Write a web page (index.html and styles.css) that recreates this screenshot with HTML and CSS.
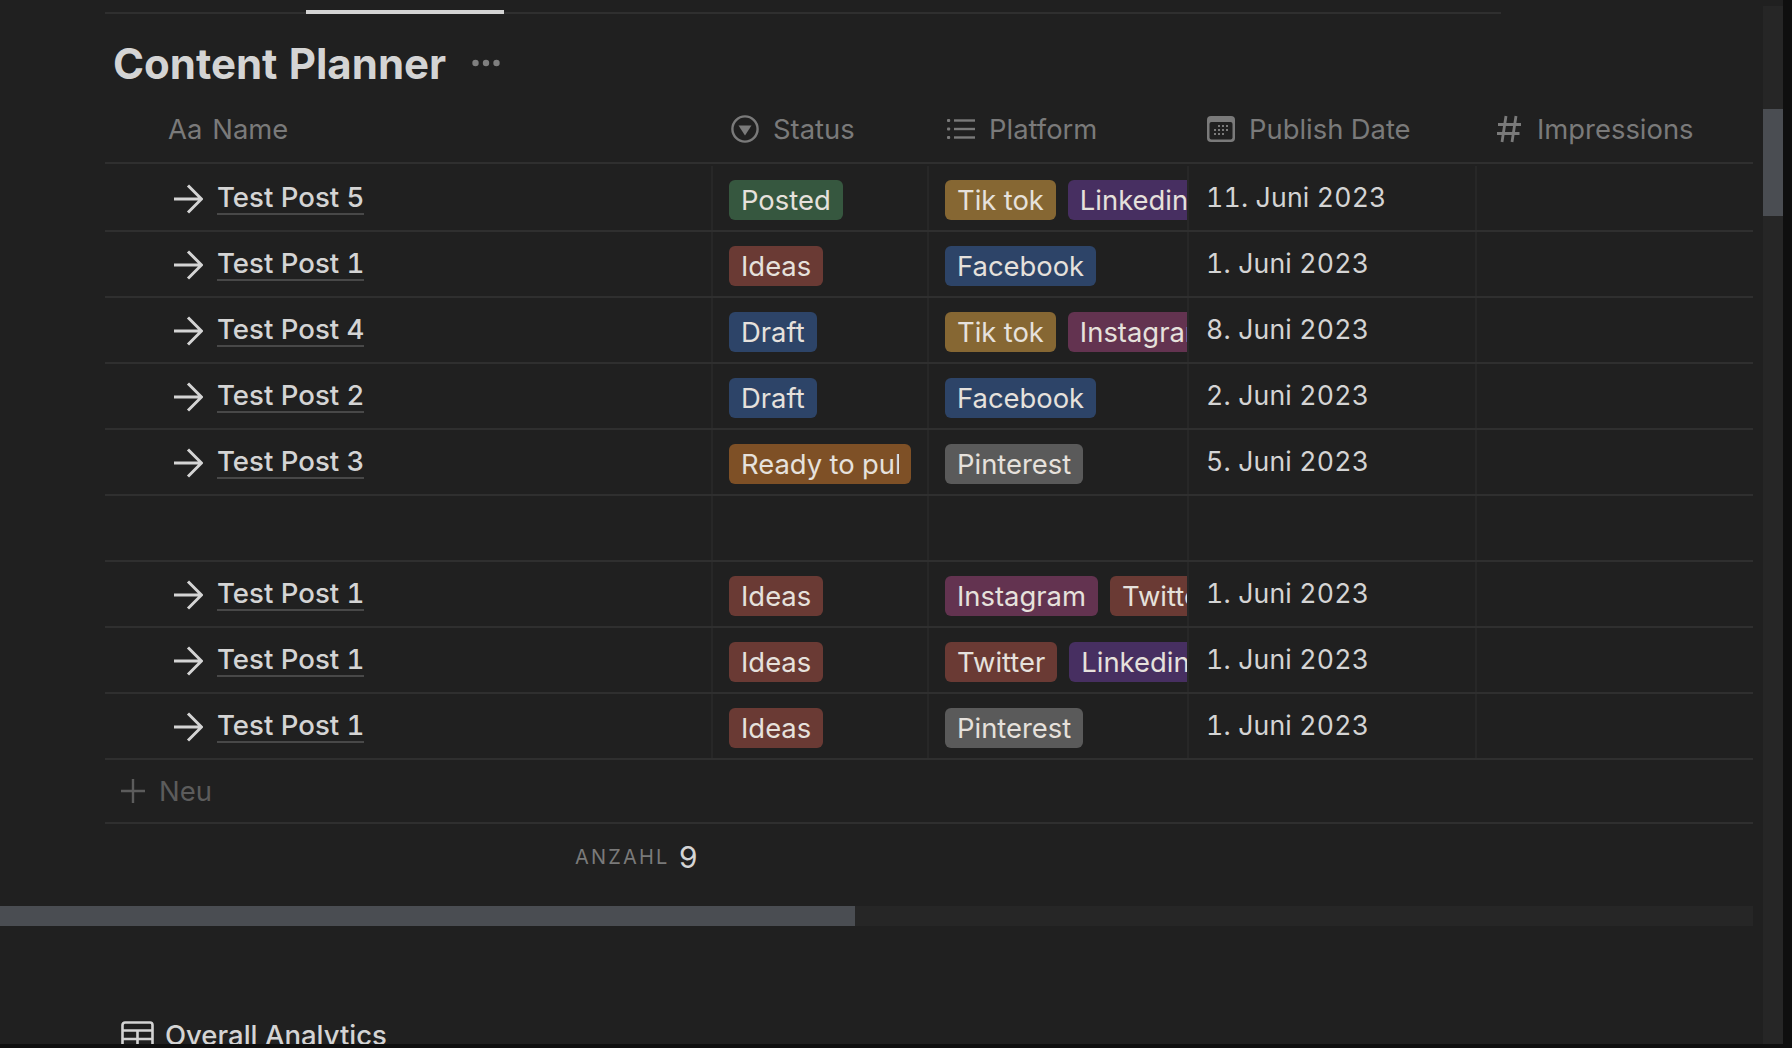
FILE: index.html
```html
<!DOCTYPE html>
<html lang="en">
<head>
    <meta charset="UTF-8">
    <title>Content Planner</title>
    <link rel="stylesheet" href="styles.css">
</head>
<body>
    <svg class="icon-defs" width="0" height="0">
        <symbol id="arrow" viewBox="0 0 30 30">
            <path d="M1 15H28.5M15 1.5L28.5 15L15 28.5" fill="none" stroke="currentColor" stroke-width="3"/>
        </symbol>
    </svg>

    <div class="viewport">
        <div class="content">
            <!-- Tabs -->
            <div class="tabs">
                <div class="tab-active"></div>
            </div>

            <!-- Title -->
            <div class="title-row">
                <h1 class="title">Content Planner</h1>
                <svg class="title-dots" width="28" height="8" viewBox="0 0 28 8" fill="currentColor">
                    <circle cx="3.5" cy="4" r="3.2"/>
                    <circle cx="14" cy="4" r="3.2"/>
                    <circle cx="24.500" cy="4" r="3.2"/>
                </svg>
            </div>

            <!-- Table -->
            <div class="table">
                <div class="row head-row">
                    <div class="head-cell name-head"><span class="aa">Aa</span>Name</div>
                    <div class="head-cell">
                        <svg class="head-icon" width="28" height="28" viewBox="0 0 28 28">
                            <circle cx="14" cy="14" r="12.600" fill="none" stroke="currentColor" stroke-width="2.400"/>
                            <path d="M7.500 10.500H20.500L14 20.500Z" fill="currentColor"/>
                        </svg>
                        Status
                    </div>
                    <div class="head-cell">
                        <svg class="head-icon" width="28" height="28" viewBox="0 0 28 28" fill="currentColor">
                            <rect x="0" y="4" width="3.200" height="3" rx="1"/>
                            <rect x="0" y="12.500" width="3.200" height="3" rx="1"/>
                            <rect x="0" y="21" width="3.200" height="3" rx="1"/>
                            <rect x="7" y="4.300" width="21" height="2.400"/>
                            <rect x="7" y="12.800" width="21" height="2.400"/>
                            <rect x="7" y="21.300" width="21" height="2.400"/>
                        </svg>
                        Platform
                    </div>
                    <div class="head-cell">
                        <svg class="head-icon" width="28" height="28" viewBox="0 0 28 28">
                            <rect x="0" y="1" width="28" height="26" rx="4" fill="currentColor"/>
                            <rect x="2.500" y="7" width="23" height="17.500" rx="2" fill="#202020"/>
                            <g fill="currentColor">
                                <rect x="11" y="10" width="2" height="2"/><rect x="15" y="10" width="2" height="2"/><rect x="19" y="10" width="2" height="2"/>
                                <rect x="7" y="14" width="2" height="2"/><rect x="11" y="14" width="2" height="2"/><rect x="15" y="14" width="2" height="2"/><rect x="19" y="14" width="2" height="2"/>
                                <rect x="7" y="18" width="2" height="2"/><rect x="11" y="18" width="2" height="2"/><rect x="15" y="18" width="2" height="2"/>
                            </g>
                        </svg>
                        Publish Date
                    </div>
                    <div class="head-cell">
                        <svg class="head-icon hash-icon" width="24" height="28" viewBox="0 0 24 28">
                            <path d="M9 1L5 27M19 1L15 27M1 9.500H24M0 18.500H22.500" fill="none" stroke="currentColor" stroke-width="2.800"/>
                        </svg>
                        Impressions
                    </div>
                </div>

                <div class="row first-row">
                    <div class="cell name-cell"><svg class="arrow" width="30" height="30"><use href="#arrow"/></svg><span class="post-link">Test Post 5</span></div>
                    <div class="cell"><span class="pill green">Posted</span></div>
                    <div class="cell tags"><span class="pill yellow">Tik tok</span><span class="pill purple">Linkedin</span></div>
                    <div class="cell date-cell">11. Juni 2023</div>
                    <div class="cell"></div>
                </div>
                <div class="row">
                    <div class="cell name-cell"><svg class="arrow" width="30" height="30"><use href="#arrow"/></svg><span class="post-link">Test Post 1</span></div>
                    <div class="cell"><span class="pill red">Ideas</span></div>
                    <div class="cell tags"><span class="pill blue">Facebook</span></div>
                    <div class="cell date-cell">1. Juni 2023</div>
                    <div class="cell"></div>
                </div>
                <div class="row">
                    <div class="cell name-cell"><svg class="arrow" width="30" height="30"><use href="#arrow"/></svg><span class="post-link">Test Post 4</span></div>
                    <div class="cell"><span class="pill blue">Draft</span></div>
                    <div class="cell tags"><span class="pill yellow">Tik tok</span><span class="pill pink">Instagram</span></div>
                    <div class="cell date-cell">8. Juni 2023</div>
                    <div class="cell"></div>
                </div>
                <div class="row">
                    <div class="cell name-cell"><svg class="arrow" width="30" height="30"><use href="#arrow"/></svg><span class="post-link">Test Post 2</span></div>
                    <div class="cell"><span class="pill blue">Draft</span></div>
                    <div class="cell tags"><span class="pill blue">Facebook</span></div>
                    <div class="cell date-cell">2. Juni 2023</div>
                    <div class="cell"></div>
                </div>
                <div class="row">
                    <div class="cell name-cell"><svg class="arrow" width="30" height="30"><use href="#arrow"/></svg><span class="post-link">Test Post 3</span></div>
                    <div class="cell"><span class="pill orange clipped"><span class="pill-text">Ready to publish</span></span></div>
                    <div class="cell tags"><span class="pill gray">Pinterest</span></div>
                    <div class="cell date-cell">5. Juni 2023</div>
                    <div class="cell"></div>
                </div>
                <div class="row">
                    <div class="cell name-cell"></div>
                    <div class="cell"></div>
                    <div class="cell"></div>
                    <div class="cell"></div>
                    <div class="cell"></div>
                </div>
                <div class="row">
                    <div class="cell name-cell"><svg class="arrow" width="30" height="30"><use href="#arrow"/></svg><span class="post-link">Test Post 1</span></div>
                    <div class="cell"><span class="pill red">Ideas</span></div>
                    <div class="cell tags"><span class="pill pink">Instagram</span><span class="pill red">Twitter</span></div>
                    <div class="cell date-cell">1. Juni 2023</div>
                    <div class="cell"></div>
                </div>
                <div class="row">
                    <div class="cell name-cell"><svg class="arrow" width="30" height="30"><use href="#arrow"/></svg><span class="post-link">Test Post 1</span></div>
                    <div class="cell"><span class="pill red">Ideas</span></div>
                    <div class="cell tags"><span class="pill red">Twitter</span><span class="pill purple">Linkedin</span></div>
                    <div class="cell date-cell">1. Juni 2023</div>
                    <div class="cell"></div>
                </div>
                <div class="row">
                    <div class="cell name-cell"><svg class="arrow" width="30" height="30"><use href="#arrow"/></svg><span class="post-link">Test Post 1</span></div>
                    <div class="cell"><span class="pill red">Ideas</span></div>
                    <div class="cell tags"><span class="pill gray">Pinterest</span></div>
                    <div class="cell date-cell">1. Juni 2023</div>
                    <div class="cell"></div>
                </div>

                <div class="new-row">
                    <svg class="plus" width="24" height="24" viewBox="0 0 24 24">
                        <path d="M0 12H24M12 0V24" fill="none" stroke="currentColor" stroke-width="2.400"/>
                    </svg>
                    Neu
                </div>

                <div class="count-row">
                    <span class="count-label">ANZAHL</span>
                    <span class="count-value">9</span>
                </div>
            </div>

            <!-- Horizontal scrollbar -->
            <div class="scroll-h">
                <div class="scroll-h-thumb"></div>
            </div>

            <!-- Next section -->
            <div class="section-head">
                <svg class="section-icon" width="33" height="28" viewBox="0 0 33 28">
                    <path d="M4 1.500H29A2.500 2.500 0 0 1 31.500 4V24A2.500 2.500 0 0 1 29 26.500H4A2.500 2.500 0 0 1 1.500 24V4A2.500 2.500 0 0 1 4 1.500ZM1.500 9.500H31.500M1.500 18H31.500M16.500 9.500V26.500" fill="none" stroke="currentColor" stroke-width="2.600"/>
                </svg>
                Overall Analytics
            </div>
        </div>

        <!-- Vertical scrollbar -->
        <div class="scroll-v">
            <div class="scroll-v-thumb"></div>
        </div>
        <div class="edge-right"></div>
    </div>
    <div class="edge-bottom"></div>
</body>
</html>
```

FILE: styles.css
```css
* {
    box-sizing: border-box;
    margin: 0;
    padding: 0;
    font-family: 'Inter', 'Liberation Sans', sans-serif;
    font-variant-numeric: tabular-nums;
}

body {
    width: 1792px;
    height: 1048px;
    display: flex;
    flex-direction: column;
    overflow: hidden;
    background-color: #202020;
    color: #d4d4d4;
}

.icon-defs {
    display: block;
    height: 0;
}

.viewport {
    flex: 1;
    min-height: 0;
    display: flex;
    overflow: hidden;
}

.content {
    width: 1763px;
    flex: 0 0 auto;
}

.tabs {
    width: 1396px;
    margin-left: 105px;
    padding-top: 10px;
    border-bottom: 2px solid #2f2f2f;
}

.tab-active {
    width: 198px;
    height: 4px;
    margin-left: 201px;
    margin-bottom: -2px;
    background-color: #d4d4d4;
}

.title-row {
    display: flex;
    align-items: center;
    height: 82px;
    padding: 30px 0 12px 113px;
}

.title {
    font-size: 42px;
    font-weight: 700;
    line-height: 42px;
    color: #d4d4d4;
}

.title-dots {
    margin-left: 26px;
    margin-top: -2px;
    color: #7f7f7f;
}

.table {
    width: 1648px;
    margin-left: 105px;
}

.row {
    display: grid;
    grid-template-columns: 606px 216px 260px 288px 1fr;
    height: 66px;
    border-bottom: 2px solid #2f2f2f;
}

.head-row {
    height: 68px;
}

.first-row {
    height: 68px;
    padding-top: 2px;
}

.head-cell {
    display: flex;
    align-items: center;
    padding-left: 20px;
    font-size: 27.4px;
    color: #7a7a7a;
}

.name-head {
    padding-left: 63px;
}

.aa {
    margin-right: 10px;
}

.head-icon {
    flex: 0 0 auto;
    margin-right: 14px;
}

.hash-icon {
    margin-left: 2px;
    margin-right: 16px;
}

.cell {
    border-left: 2px solid #272727;
    min-width: 0;
    padding: 14px 0 0 16px;
}

.name-cell {
    display: flex;
    align-items: flex-start;
    border-left: none;
    padding: 0 0 0 68px;
}

.arrow {
    flex: 0 0 auto;
    margin-top: 18px;
    color: #d4d4d4;
}

.post-link {
    margin-left: 14px;
    margin-top: 15px;
    font-size: 27.6px;
    font-weight: 500;
    line-height: 32px;
    border-bottom: 2px solid #484848;
    color: #d4d4d4;
}

.tags {
    display: flex;
    gap: 12px;
    overflow: hidden;
}

.date-cell {
    padding: 14px 0 0 17px;
    font-size: 26.6px;
    line-height: 34px;
    letter-spacing: 0.2px;
    color: #d4d4d4;
    white-space: nowrap;
}

.pill {
    display: inline-block;
    flex: 0 0 auto;
    height: 40px;
    padding: 0 12px;
    border-radius: 6px;
    font-size: 27.4px;
    line-height: 40px;
    white-space: nowrap;
    color: #e6e1dc;
}

.clipped {
    width: 182px;
}

.pill-text {
    display: block;
    overflow: hidden;
}

.green { background-color: #36573f; }
.red { background-color: #6a3a34; }
.blue { background-color: #2d4468; }
.yellow { background-color: #866733; }
.purple { background-color: #472f61; }
.pink { background-color: #633350; }
.orange { background-color: #7e5026; }
.gray { background-color: #5a5a5a; }

.new-row {
    display: flex;
    align-items: center;
    height: 64px;
    padding-left: 16px;
    border-bottom: 2px solid #2f2f2f;
    font-size: 27.5px;
    color: #5c5c5c;
}

.plus {
    margin-right: 14px;
}

.count-row {
    display: flex;
    align-items: center;
    justify-content: flex-end;
    width: 607px;
    height: 66px;
    padding-right: 14px;
}

.count-label {
    font-size: 20px;
    letter-spacing: 2.2px;
    color: #7a7a7a;
}

.count-value {
    margin-left: 9px;
    font-size: 30px;
    color: #d4d4d4;
}

.scroll-h {
    width: 1753px;
    height: 20px;
    margin-top: 16px;
    background-color: #262626;
}

.scroll-h-thumb {
    width: 855px;
    height: 20px;
    background-color: #4a4d52;
}

.section-head {
    display: flex;
    align-items: center;
    height: 36px;
    margin-top: 91px;
    padding-left: 121px;
    font-size: 27.5px;
    font-weight: 500;
    color: #d4d4d4;
}

.section-icon {
    margin-right: 11px;
}

.scroll-v {
    width: 20px;
    flex: 0 0 auto;
    margin-top: 6px;
    padding-top: 103px;
    background-color: #262626;
}

.scroll-v-thumb {
    height: 107px;
    background-color: #4a4d52;
}

.edge-right {
    flex: 1;
    background-color: #0f0f0f;
}

.edge-bottom {
    height: 4px;
    flex: 0 0 auto;
    background-color: #0f0f0f;
}
```
